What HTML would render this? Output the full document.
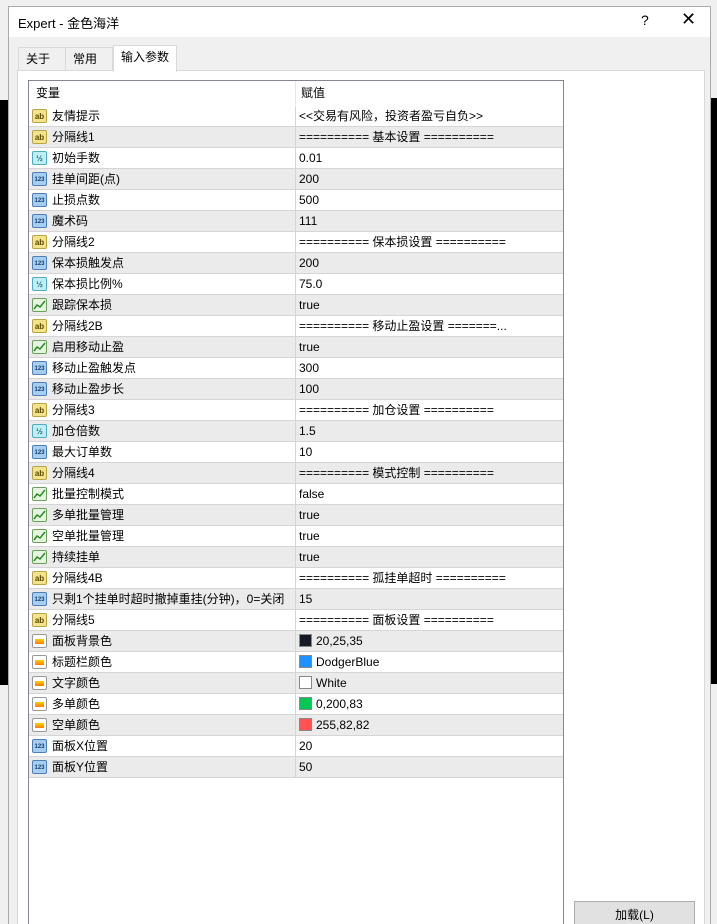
<!DOCTYPE html>
<html style="overflow:hidden;width:717px;height:924px"><head><meta charset="utf-8"><style>
*{margin:0;padding:0;box-sizing:border-box}
body{width:717px;height:924px;overflow:hidden;background:#f0f0f0;position:relative;font-family:"Liberation Sans","Noto Sans CJK SC",sans-serif;font-size:12px;color:#000}
.abs{position:absolute}
.dlg{left:8px;top:6px;width:703px;height:918px;background:#f0f0f0;border:1px solid #aaa;border-bottom:none;overflow:hidden}
.title{left:0;top:0;width:701px;height:30px;background:#fff}
.tab{position:absolute;height:24px;border:1px solid #d9d9d9;border-bottom:none;background:#f0f0f0;line-height:22px;padding-left:7px;font-size:12px}
.panel{left:8px;top:63px;width:688px;height:870px;background:#fff;border:1px solid #d9d9d9}
.list{left:19px;top:73px;width:536px;height:860px;border:1px solid #828790;background:#fff}
.row{position:absolute;left:0;width:534px;height:21px;border-bottom:1px solid #d5d5d5;line-height:20px}
.row.g{background:#ebebeb}
.row .n{position:absolute;left:23px;top:0}
.row .v{position:absolute;left:270px;top:0;white-space:nowrap}
.row .d{position:absolute;left:266px;top:0;width:1px;height:21px;background:#d5d5d5}
.ic{position:absolute;left:3px;top:3px;width:15px;height:14px;border-radius:2px;font-size:8px;line-height:14px;text-align:center;font-weight:bold}
.ab{background:#f3e38a;border:1px solid #b9a443;color:#5a4a00}
.hf{background:#bfeff5;border:1px solid #4aaec0;color:#1a6b7a}
.nm{background:#a9cdf0;border:1px solid #4a7fb8;color:#103d70;font-size:6px}
.bo{background:#e6f5e0;border:1px solid #6aa05a}
.co{background:#fff;border:1px solid #999}
.co::after{content:"";position:absolute;left:2px;top:4px;width:9px;height:5px;background:linear-gradient(#ffd000,#ff7a00)}
.sw{display:inline-block;width:13px;height:13px;vertical-align:-2px;margin-right:4px;border:1px solid #888}
</style></head><body>
<div class="abs" style="left:0;top:100px;width:8px;height:585px;background:#000"></div>
<div class="abs" style="left:704px;top:98px;width:13px;height:586px;background:#000"></div>
<div class="abs dlg">
 <div class="abs title"><span class="abs" style="left:9px;top:6px;font-size:13px">Expert - 金色海洋</span>
 <span class="abs" style="left:632px;top:5px;font-size:14px">?</span>
 <span class="abs" style="left:672px;top:2px;font-size:18px;font-weight:300">✕</span></div>
 <div class="tab" style="left:9px;top:40px;width:48px">关于</div>
 <div class="tab" style="left:56px;top:40px;width:48px">常用</div>
 <div class="tab" style="left:104px;top:38px;width:64px;height:27px;background:#fff;z-index:2">输入参数</div>
 <div class="abs panel"></div>
 <div class="abs list">
  <div class="abs" style="left:0;top:0;width:534px;height:25px;line-height:25px"><span class="abs" style="left:7px">变量</span><span class="abs" style="left:272px">赋值</span><span class="abs" style="left:266px;top:0;width:1px;height:24px;background:#e5e5e5"></span></div>
  <div id="rows"></div>
 </div>
 <div class="abs" style="left:565px;top:894px;width:121px;height:40px;background:#e1e1e1;border:1px solid #adadad;text-align:center;line-height:26px">加载(L)</div>
</div>
<script>
var R=[["ab","友情提示","<<交易有风险，投资者盈亏自负>>"],["ab","分隔线1","========== 基本设置 =========="],["hf","初始手数","0.01"],["nm","挂单间距(点)","200"],["nm","止损点数","500"],["nm","魔术码","111"],["ab","分隔线2","========== 保本损设置 =========="],["nm","保本损触发点","200"],["hf","保本损比例%","75.0"],["bo","跟踪保本损","true"],["ab","分隔线2B","========== 移动止盈设置 =======..."],["bo","启用移动止盈","true"],["nm","移动止盈触发点","300"],["nm","移动止盈步长","100"],["ab","分隔线3","========== 加仓设置 =========="],["hf","加仓倍数","1.5"],["nm","最大订单数","10"],["ab","分隔线4","========== 模式控制 =========="],["bo","批量控制模式","false"],["bo","多单批量管理","true"],["bo","空单批量管理","true"],["bo","持续挂单","true"],["ab","分隔线4B","========== 孤挂单超时 =========="],["nm","只剩1个挂单时超时撤掉重挂(分钟)，0=关闭","15"],["ab","分隔线5","========== 面板设置 =========="],["co","面板背景色","#141923|20,25,35"],["co","标题栏颜色","#1e90ff|DodgerBlue"],["co","文字颜色","#ffffff|White"],["co","多单颜色","#00c853|0,200,83"],["co","空单颜色","#ff5252|255,82,82"],["nm","面板X位置","20"],["nm","面板Y位置","50"]];
var h="";R.forEach(function(r,i){var t={ab:"ab",hf:"½",nm:"123",bo:"",co:""}[r[0]];var v=r[2];
if(r[0]=="co"){var p=v.split("|");v='<span class="sw" style="background:'+p[0]+'"></span>'+p[1];}else v=v.replace(/</g,"&lt;").replace(/>/g,"&gt;");
var ic=r[0]=="bo"?'<svg width="13" height="12" style="position:absolute;left:0;top:0"><path d="M1 10 L4 6 L7 8 L12 2" stroke="#2a8a2a" stroke-width="1.5" fill="none"/></svg>':t;
h+='<div class="row'+(i%2?' g':'')+'" style="top:'+(25+i*21)+'px"><span class="ic '+r[0]+'">'+ic+'</span><span class="n">'+r[1]+'</span><span class="d"></span><span class="v">'+v+'</span></div>';});
document.getElementById("rows").innerHTML=h;
</script>
</body></html>
